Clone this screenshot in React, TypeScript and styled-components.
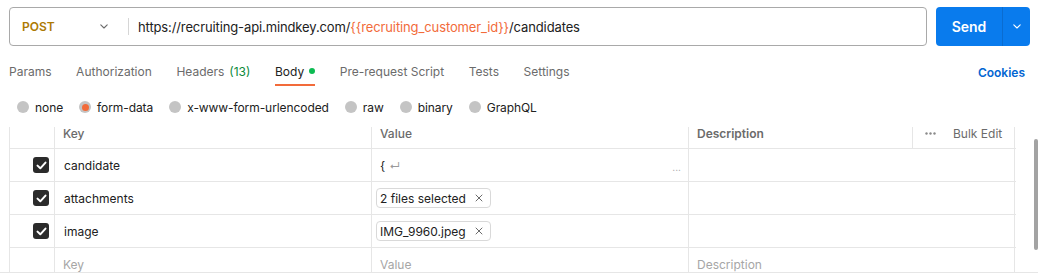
import React from "react";
import styled, { createGlobalStyle } from "styled-components";

const Global = createGlobalStyle`
  html, body { margin: 0; padding: 0; background: #ffffff; }
  body {
    font-family: Inter, "Noto Sans", "Liberation Sans", sans-serif;
    font-size: 12px;
    color: #212121;
    -webkit-font-smoothing: antialiased;
  }
`;

const Page = styled.div`
  width: 1038px;
  height: 280px;
  overflow: hidden;
  display: flex;
  flex-direction: column;
  padding-top: 7px;
  box-sizing: border-box;
`;

const UrlRow = styled.div`
  display: flex;
  gap: 9px;
  height: 39px;
  padding: 0 8px 0 9px;
`;

const UrlBox = styled.div`
  flex: 1;
  display: flex;
  align-items: center;
  border: 1px solid #a9a9a9;
  border-radius: 4px;
  box-sizing: border-box;
`;

const Method = styled.div`
  width: 118px;
  box-sizing: border-box;
  padding: 0 20px 0 12px;
  display: flex;
  align-items: center;
  justify-content: space-between;
  color: #ad7a03;
  font-weight: 600;
  font-size: 12px;
`;

const VDivider = styled.div`
  width: 1px;
  height: 17px;
  background: #d6d6d6;
`;

const UrlText = styled.div`
  padding-left: 9px;
  font-size: 13px;
  letter-spacing: -0.12px;
  color: #212121;
  white-space: nowrap;
`;

const Variable = styled.span`
  color: #f26b3a;
`;

const SendGroup = styled.div`
  width: 94px;
  display: flex;
  border-radius: 4px;
  overflow: hidden;
  background: #097bed;
  color: #ffffff;
`;

const SendMain = styled.div`
  flex: 1;
  display: flex;
  align-items: center;
  justify-content: center;
  font-weight: 600;
  font-size: 14px;
  border-right: 1px solid #0a6cd0;
`;

const SendArrow = styled.div`
  width: 27px;
  display: flex;
  align-items: center;
  justify-content: center;
`;

const TabBar = styled.div`
  display: flex;
  align-items: flex-start;
  margin-top: 12px;
  padding: 0 13px 0 9px;
  height: 28px;
`;

const Tab = styled.div<{ $active?: boolean }>`
  height: 28px;
  box-sizing: border-box;
  display: flex;
  align-items: center;
  gap: 5px;
  margin-right: 24.6px;
  font-size: 12px;
  color: ${(p) => (p.$active ? "#212121" : "#6b6b6b")};
  border-bottom: 2px solid ${(p) => (p.$active ? "#f26b3a" : "transparent")};
  white-space: nowrap;
`;

const Count = styled.span`
  color: #0a8a3a;
`;

const Dot = styled.span`
  width: 6px;
  height: 6px;
  border-radius: 50%;
  background: #0cbb52;
`;

const Spacer = styled.div`
  flex: 1;
`;

const Cookies = styled.div`
  height: 28px;
  display: flex;
  align-items: center;
  font-size: 12px;
  font-weight: 600;
  color: #0265d2;
`;

const RadioRow = styled.div`
  display: flex;
  align-items: center;
  height: 18px;
  margin: 12px 0 11px;
  padding-left: 17px;
  gap: 16px;
`;

const RadioItem = styled.div`
  display: flex;
  align-items: center;
  gap: 6px;
  font-size: 12px;
  letter-spacing: -0.08px;
  color: #212121;
`;

const RadioCircle = styled.span<{ $checked?: boolean }>`
  width: 12px;
  height: 12px;
  border-radius: 50%;
  background: #c4c4c4;
  display: flex;
  align-items: center;
  justify-content: center;
  &::after {
    content: "";
    display: ${(p) => (p.$checked ? "block" : "none")};
    width: 7px;
    height: 7px;
    border-radius: 50%;
    background: #f26b3a;
  }
`;

const Panel = styled.div`
  flex: 1;
  display: flex;
  border-bottom: 1px solid #e6e6e6;
  padding-left: 9px;
  overflow: hidden;
  max-height: 145px;
`;

const Table = styled.div`
  width: 1006px;
  display: grid;
  grid-template-columns: 45px 317px 317px 224px 103px;
  grid-auto-rows: 33px;
  grid-template-rows: 22px;
  border-left: 1px solid #e6e6e6;
  border-right: 1px solid #e6e6e6;
  box-sizing: border-box;
  align-content: start;
`;

const Cell = styled.div<{ $span?: number; $last?: boolean }>`
  grid-column: span ${(p) => p.$span ?? 1};
  display: flex;
  align-items: center;
  padding: 0 8px;
  border-bottom: 1px solid #e6e6e6;
  border-right: ${(p) => (p.$last ? "none" : "1px solid #e6e6e6")};
  box-sizing: border-box;
  min-width: 0;
  overflow: hidden;
  white-space: nowrap;
`;

const HeadCell = styled(Cell)`
  font-size: 12px;
  font-weight: 500;
  color: #6b6b6b;
  align-items: flex-start;
`;

const HeadText = styled.span<{ $bold?: boolean }>`
  display: flex;
  align-items: center;
  height: 13px;
  line-height: 13px;
  font-weight: ${(p) => (p.$bold ? 600 : "inherit")};
`;

const CheckCell = styled(Cell)`
  justify-content: flex-end;
  padding: 0 5px 0 0;
`;

const Check = styled.span`
  width: 16px;
  height: 16px;
  border-radius: 3px;
  background: #2b2b2b;
  display: flex;
  align-items: center;
  justify-content: center;
`;

const KeyText = styled.span`
  font-size: 12px;
  color: #212121;
  padding-left: 1px;
`;

const Placeholder = styled.span`
  font-size: 12px;
  color: #a6a6a6;
`;

const ValueInline = styled.div`
  flex: 1;
  display: flex;
  align-items: center;
  justify-content: space-between;
  font-size: 12px;
`;

const Return = styled.span`
  color: #9a9a9a;
  font-size: 11px;
  margin-left: 4px;
`;

const Ellipsis = styled.span`
  color: #a6a6a6;
  font-size: 10px;
  margin-right: -1px;
  margin-top: 4px;
`;

const Chip = styled.div`
  display: flex;
  align-items: center;
  gap: 9px;
  height: 20px;
  box-sizing: border-box;
  margin-left: -4px;
  padding: 0 7px 0 3px;
  border: 1px solid #d9d9d9;
  border-radius: 4px;
  font-size: 12px;
  color: #212121;
`;

const BulkCell = styled(HeadCell)`
  gap: 17px;
  padding-left: 12px;
  font-weight: 400;
`;

const ScrollTrack = styled.div`
  flex: 1;
  display: flex;
  justify-content: flex-end;
  padding-top: 12px;
`;

const Thumb = styled.div`
  width: 4px;
  height: 111px;
  border-radius: 2px;
  background: #a3a3a3;
`;

const Chevron = ({ color }: { color: string }) => (
  <svg width="8" height="5" viewBox="0 0 8 5" fill="none">
    <path d="M0.8 0.8l3.2 3.2 3.2-3.2" stroke={color} strokeWidth="1.1" strokeLinecap="round" strokeLinejoin="round" />
  </svg>
);

const CheckIcon = () => (
  <svg width="11" height="9" viewBox="0 0 11 9" fill="none">
    <path d="M1.5 4.6l2.8 2.7L9.5 1.6" stroke="#ffffff" strokeWidth="2" strokeLinecap="round" strokeLinejoin="round" />
  </svg>
);

const XIcon = () => (
  <svg width="8" height="8" viewBox="0 0 8 8" fill="none">
    <path d="M1 1l6 6M7 1L1 7" stroke="#6b6b6b" strokeWidth="1" strokeLinecap="round" />
  </svg>
);

const Dots = () => (
  <svg width="11" height="3" viewBox="0 0 11 3" fill="#8a8a8a">
    <circle cx="1.5" cy="1.5" r="1.2" />
    <circle cx="5.5" cy="1.5" r="1.2" />
    <circle cx="9.5" cy="1.5" r="1.2" />
  </svg>
);

const tabs: { label: React.ReactNode; active?: boolean }[] = [
  { label: "Params" },
  { label: "Authorization" },
  { label: <>Headers <Count>(13)</Count></> },
  { label: <>Body<Dot /></>, active: true },
  { label: "Pre-request Script" },
  { label: "Tests" },
  { label: "Settings" },
];

const radios = [
  { label: "none" },
  { label: "form-data", checked: true },
  { label: "x-www-form-urlencoded" },
  { label: "raw" },
  { label: "binary" },
  { label: "GraphQL" },
];

type Row = { key: string; value: React.ReactNode };

const rows: Row[] = [
  {
    key: "candidate",
    value: (
      <ValueInline>
        <span>
          {"{"}
          <Return>↵</Return>
        </span>
        <Ellipsis>...</Ellipsis>
      </ValueInline>
    ),
  },
  {
    key: "attachments",
    value: (
      <Chip>
        2 files selected <XIcon />
      </Chip>
    ),
  },
  {
    key: "image",
    value: (
      <Chip>
        IMG_9960.jpeg <XIcon />
      </Chip>
    ),
  },
];

export default function App() {
  return (
    <>
      <Global />
      <Page>
        <UrlRow>
          <UrlBox>
            <Method>
              POST
              <Chevron color="#6b6b6b" />
            </Method>
            <VDivider />
            <UrlText>
              https://recruiting-api.mindkey.com/<Variable>{"{{recruiting_customer_id}}"}</Variable>/candidates
            </UrlText>
          </UrlBox>
          <SendGroup>
            <SendMain>Send</SendMain>
            <SendArrow>
              <Chevron color="#ffffff" />
            </SendArrow>
          </SendGroup>
        </UrlRow>

        <TabBar>
          {tabs.map((t, i) => (
            <Tab key={i} $active={t.active}>
              {t.label}
            </Tab>
          ))}
          <Spacer />
          <Cookies>Cookies</Cookies>
        </TabBar>

        <RadioRow>
          {radios.map((r) => (
            <RadioItem key={r.label}>
              <RadioCircle $checked={r.checked} />
              {r.label}
            </RadioItem>
          ))}
        </RadioRow>

        <Panel>
          <Table>
            <HeadCell />
            <HeadCell>
              <HeadText>Key</HeadText>
            </HeadCell>
            <HeadCell>
              <HeadText>Value</HeadText>
            </HeadCell>
            <HeadCell>
              <HeadText $bold>Description</HeadText>
            </HeadCell>
            <BulkCell $last>
              <HeadText>
                <Dots />
              </HeadText>
              <HeadText>Bulk Edit</HeadText>
            </BulkCell>

            {rows.map((r) => (
              <React.Fragment key={r.key}>
                <CheckCell>
                  <Check>
                    <CheckIcon />
                  </Check>
                </CheckCell>
                <Cell>
                  <KeyText>{r.key}</KeyText>
                </Cell>
                <Cell>{r.value}</Cell>
                <Cell $span={2} $last />
              </React.Fragment>
            ))}

            <CheckCell />
            <Cell>
              <Placeholder>Key</Placeholder>
            </Cell>
            <Cell>
              <Placeholder>Value</Placeholder>
            </Cell>
            <Cell $span={2} $last>
              <Placeholder>Description</Placeholder>
            </Cell>
          </Table>
          <ScrollTrack>
            <Thumb />
          </ScrollTrack>
        </Panel>
      </Page>
    </>
  );
}
